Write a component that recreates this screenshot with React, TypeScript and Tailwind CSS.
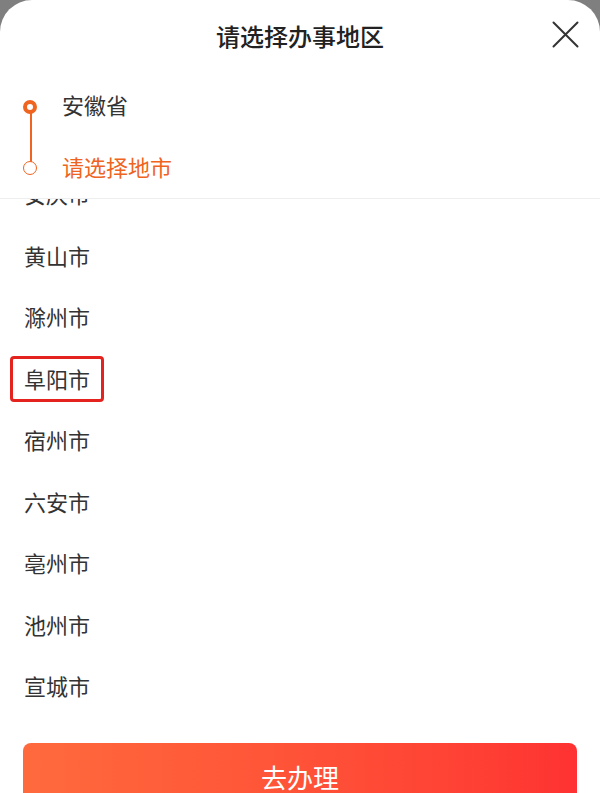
const cities = ['安庆市', '黄山市', '滁州市', '阜阳市', '宿州市', '六安市', '亳州市', '池州市', '宣城市'];

const font = { fontFamily: '"Noto Sans CJK SC", "Noto Sans", sans-serif' };

export default function App() {
  return (
    <div className="w-[600px] h-[793px] bg-[#7f7f7f] overflow-hidden" style={font}>
      <div className="bg-white rounded-t-[32px] h-full">
        {/* header */}
        <div className="relative h-[76px] flex items-center justify-center pb-[4px]">
          <h1 className="text-[24px] font-medium text-[#222]">请选择办事地区</h1>
          <button className="absolute right-[21px] top-[21px] text-[#333]">
            <svg width="27" height="27" viewBox="0 0 27 27" fill="none" stroke="currentColor" strokeWidth="2" strokeLinecap="round">
              <path d="M1.5 1.5 L25.5 25.5 M25.5 1.5 L1.5 25.5" />
            </svg>
          </button>
        </div>

        {/* steps */}
        <div className="border-b border-[#eeeeee]">
          <div className="h-[61px] flex items-center">
            <div className="relative w-[62px] h-full flex items-center justify-center">
              <span className="absolute left-[30px] top-1/2 w-[1.5px] h-[61px] bg-[#ef6420]" />
              <span className="relative ml-[-2px] w-[14px] h-[14px] rounded-full border-[4.5px] border-[#ef6420] bg-white" />
            </div>
            <span className="mb-[4px] text-[22px] font-normal text-[#333]">安徽省</span>
          </div>
          <div className="h-[61px] flex items-center">
            <div className="w-[62px] h-full flex items-center justify-center">
              <span className="relative ml-[-2px] w-[14px] h-[14px] rounded-full border border-[#ef6420] bg-white" />
            </div>
            <span className="mb-[3px] text-[22px] text-[#ef6420]">请选择地市</span>
          </div>
        </div>

        {/* city list, scrolled */}
        <div className="h-[521px] overflow-hidden">
          <ul className="-mt-[36px]">
            {cities.map((c) => (
              <li key={c} className="relative h-[61.5px] flex items-center px-[24px] text-[22px] text-[#333]">
                {c}
                {c === '阜阳市' && (
                  <span className="absolute left-[10px] top-[8px] w-[94px] h-[46px] border-[3px] border-[#e5231e] rounded-[4px]" />
                )}
              </li>
            ))}
          </ul>
        </div>

        {/* footer */}
        <div className="px-[23px] pt-[23px]">
          <button className="w-full h-[70px] pb-[4px] rounded-[8px] bg-gradient-to-r from-[#ff6a3d] to-[#fe3232] text-white text-[26px] flex items-center justify-center">
            去办理
          </button>
        </div>
      </div>
    </div>
  );
}
